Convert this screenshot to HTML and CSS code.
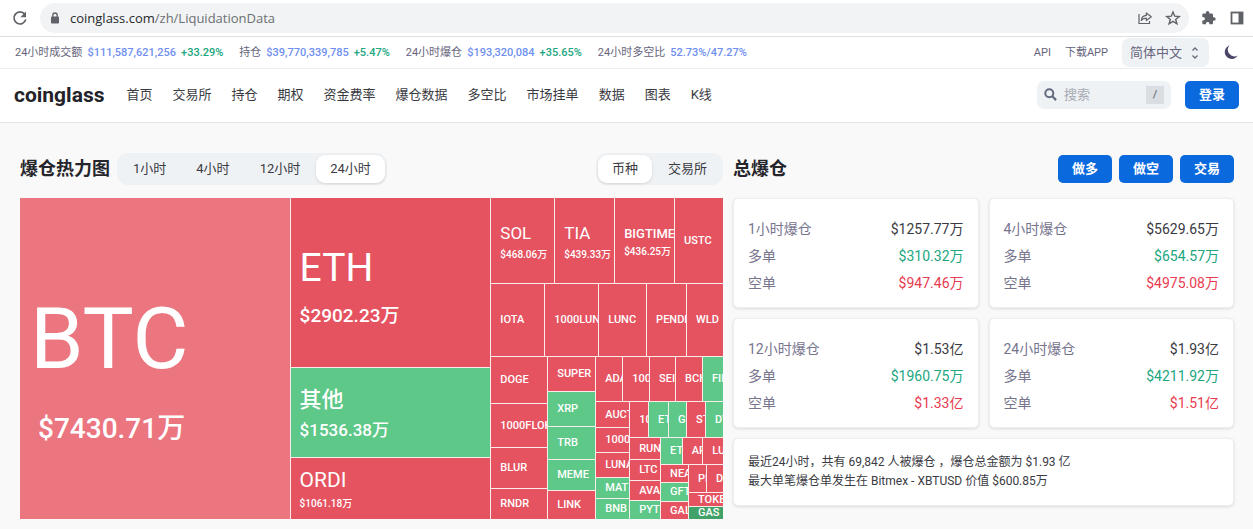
FILE: index.html
```html
<!DOCTYPE html>
<html lang="zh-CN">
<head>
<meta charset="utf-8">
<meta name="viewport" content="width=device-width, initial-scale=1">
<title>coinglass</title>
<link rel="stylesheet" href="styles.css">
</head>
<body>
<div class="browser">
  <button class="icon-btn" aria-label="Reload"><svg width="16" height="16" viewBox="0 0 16 16"><path d="M12.7 4.2A6 6 0 1 0 13.8 9.6" fill="none" stroke="#5f6368" stroke-width="1.7"/><path d="M14 1.6v5.6H8.4z" fill="#5f6368"/></svg></button>
  <div class="omnibox">
    <svg width="10" height="12" viewBox="0 0 10 12"><rect x="1" y="4.5" width="8" height="7" rx="1" fill="#5f6368"/><path d="M2.8 5V3.2a2.2 2.2 0 0 1 4.4 0V5" fill="none" stroke="#5f6368" stroke-width="1.3"/></svg>
    <span class="url"><b>coinglass.com</b>/zh/LiquidationData</span>
    <button class="icon-btn" aria-label="Share"><svg width="16" height="16" viewBox="0 0 16 16" fill="none" stroke="#5f6368" stroke-width="1.2"><path d="M2 4v9.5h10.5V11"/><path d="M9.3 3v2.4C6 5.600 4.600 7.600 4.300 10.500c1.300-1.700 2.700-2.300 5-2.300v2.400L14.300 6.800z" stroke-linejoin="round"/></svg></button>
    <button class="icon-btn" aria-label="Bookmark"><svg width="16" height="16" viewBox="0 0 16 16"><path d="M8 2l1.700 4.200 4.500.3-3.500 2.900 1.200 4.400L8 11.400l-3.900 2.400 1.200-4.400L1.800 6.500l4.500-.3z" fill="none" stroke="#5f6368" stroke-width="1.400"/></svg></button>
  </div>
  <button class="icon-btn" aria-label="Extensions"><svg width="16" height="16" viewBox="0 0 16 16"><path d="M13 7.300h-1V4.700c0-.7-.6-1.300-1.300-1.300H8.300V2.600a1.700 1.700 0 0 0-3.400 0v.8H2.500c-.7 0-1.200.6-1.200 1.300V7h.8a1.800 1.800 0 0 1 0 3.600h-.8V13c0 .7.500 1.300 1.200 1.300h2.400v-.8a1.800 1.800 0 0 1 3.500 0v.8h2.300c.7 0 1.300-.6 1.300-1.300v-2.300h1a1.700 1.700 0 0 0 0-3.400z" fill="#5f6368"/></svg></button>
  <button class="icon-btn" aria-label="Side panel"><svg width="14" height="14" viewBox="0 0 14 14"><rect x="1.500" y="1.500" width="11" height="11" fill="none" stroke="#5f6368" stroke-width="1.800"/><rect x="8.500" y="1.500" width="4" height="11" fill="#5f6368"/></svg></button>
</div>

<div class="ticker">
  <div class="stats">
    <span class="stat">24小时成交额 <b class="blue">$111,587,621,256</b> <b class="up">+33.29%</b></span>
    <span class="stat">持仓 <b class="blue">$39,770,339,785</b> <b class="up">+5.47%</b></span>
    <span class="stat">24小时爆仓 <b class="blue">$193,320,084</b> <b class="up">+35.65%</b></span>
    <span class="stat">24小时多空比 <b class="blue">52.73%/47.27%</b></span>
  </div>
  <div class="tools">
    <a href="#">API</a>
    <a href="#">下载APP</a>
    <div class="language">
      <select aria-label="语言"><option>简体中文</option></select>
      <svg width="8" height="14" viewBox="0 0 8 14" fill="none" stroke="#666b7a" stroke-width="1.300"><path d="M1.500 4.500L4 2l2.500 2.500M1.500 9.500L4 12l2.500-2.500"/></svg>
    </div>
    <button class="icon-btn" aria-label="深色模式"><svg width="16" height="16" viewBox="0 0 16 16"><path d="M6.500 0.500A6.900 6.900 0 1 0 14.600 10.600 6.600 6.600 0 0 1 6.500 0.500z" fill="#4a4668"/></svg></button>
  </div>
</div>

<header class="header">
  <a class="logo" href="#">coinglass</a>
  <nav class="nav">
    <a href="#">首页</a><a href="#">交易所</a><a href="#">持仓</a><a href="#">期权</a><a href="#">资金费率</a><a href="#">爆仓数据</a><a href="#">多空比</a><a href="#">市场挂单</a><a href="#">数据</a><a href="#">图表</a><a href="#">K线</a>
  </nav>
  <label class="search">
    <svg width="13" height="13" viewBox="0 0 13 13" fill="none" stroke="#646b80"><circle cx="5.300" cy="5.300" r="4" stroke-width="2"/><path d="M8.300 8.300l3.800 3.800" stroke-width="2.200"/></svg>
    <input type="text" placeholder="搜索" aria-label="搜索">
    <kbd>/</kbd>
  </label>
  <button class="primary">登录</button>
</header>

<main class="main">
  <section class="panel">
    <div class="panel-head">
      <h1>爆仓热力图</h1>
      <div class="tabs">
        <button>1小时</button><button>4小时</button><button>12小时</button><button class="active">24小时</button>
      </div>
      <div class="tabs tabs-end">
        <button class="active">币种</button><button>交易所</button>
      </div>
    </div>
    <div class="treemap">
      <div class="tile soft btc" style="--w:270"><span>BTC</span><em>$7430.71万</em></div>
      <div class="col" style="--w:200">
        <div class="tile eth" style="--w:169"><span>ETH</span><em>$2902.23万</em></div>
        <div class="tile green other" style="--w:89"><span>其他</span><em>$1536.38万</em></div>
        <div class="tile ordi" style="--w:61"><span>ORDI</span><em>$1061.18万</em></div>
      </div>
      <div class="col" style="--w:232">
        <div class="row" style="--w:85">
          <div class="tile mid" style="--w:63"><span>SOL</span><em>$468.06万</em></div>
          <div class="tile mid" style="--w:59"><span>TIA</span><em>$439.33万</em></div>
          <div class="tile big" style="--w:59"><span>BIGTIME</span><em>$436.25万</em></div>
          <div class="tile" style="--w:48"><span>USTC</span></div>
        </div>
        <div class="row" style="--w:72">
          <div class="tile" style="--w:53"><span>IOTA</span></div>
          <div class="tile" style="--w:53"><span>1000LUNC</span></div>
          <div class="tile" style="--w:47"><span>LUNC</span></div>
          <div class="tile" style="--w:39"><span>PENDLE</span></div>
          <div class="tile" style="--w:36"><span>WLD</span></div>
        </div>
        <div class="row" style="--w:162">
          <div class="col" style="--w:56">
            <div class="tile" style="--w:46"><span>DOGE</span></div>
            <div class="tile" style="--w:43"><span>1000FLOKI</span></div>
            <div class="tile" style="--w:40"><span>BLUR</span></div>
            <div class="tile" style="--w:30"><span>RNDR</span></div>
          </div>
          <div class="col" style="--w:47">
            <div class="tile" style="--w:34"><span>SUPER</span></div>
            <div class="tile green" style="--w:34"><span>XRP</span></div>
            <div class="tile green" style="--w:32"><span>TRB</span></div>
            <div class="tile green" style="--w:30"><span>MEME</span></div>
            <div class="tile" style="--w:28"><span>LINK</span></div>
          </div>
          <div class="col" style="--w:127">
            <div class="row" style="--w:44">
              <div class="tile" style="--w:26"><span>ADA</span></div>
              <div class="tile" style="--w:26"><span>1000</span></div>
              <div class="tile" style="--w:25"><span>SEI</span></div>
              <div class="tile" style="--w:26"><span>BCH</span></div>
              <div class="tile green" style="--w:20"><span>FIL</span></div>
            </div>
            <div class="row" style="--w:117">
              <div class="col" style="--w:33">
                <div class="tile" style="--w:25"><span>AUCTION</span></div>
                <div class="tile" style="--w:24"><span>1000</span></div>
                <div class="tile" style="--w:24"><span>LUNA</span></div>
                <div class="tile green" style="--w:20"><span>MATIC</span></div>
                <div class="tile green" style="--w:20"><span>BNB</span></div>
              </div>
              <div class="col" style="--w:93">
                <div class="row" style="--w:35">
                  <div class="tile" style="--w:18"><span>10</span></div>
                  <div class="tile green" style="--w:19"><span>ET</span></div>
                  <div class="tile green" style="--w:17"><span>GL</span></div>
                  <div class="tile" style="--w:18"><span>ST</span></div>
                  <div class="tile green" style="--w:17"><span>DY</span></div>
                </div>
                <div class="row" style="--w:81">
                  <div class="col" style="--w:30">
                    <div class="tile" style="--w:21"><span>RUNE</span></div>
                    <div class="tile" style="--w:20"><span>LTC</span></div>
                    <div class="tile" style="--w:19"><span>AVAX</span></div>
                    <div class="tile green" style="--w:18"><span>PYTH</span></div>
                  </div>
                  <div class="col" style="--w:62">
                    <div class="row" style="--w:26">
                      <div class="tile green" style="--w:21"><span>ET</span></div>
                      <div class="tile" style="--w:20"><span>AR</span></div>
                      <div class="tile" style="--w:20"><span>LU</span></div>
                    </div>
                    <div class="row" style="--w:54">
                      <div class="col" style="--w:27">
                        <div class="tile" style="--w:17"><span>NEAR</span></div>
                        <div class="tile green" style="--w:18"><span>GFT</span></div>
                        <div class="tile" style="--w:17"><span>GALA</span></div>
                      </div>
                      <div class="col" style="--w:34">
                        <div class="row" style="--w:27">
                          <div class="tile" style="--w:17"><span>PE</span></div>
                          <div class="tile" style="--w:16"><span>DO</span></div>
                        </div>
                        <div class="tile" style="--w:13"><span>TOKEN</span></div>
                        <div class="tile deep" style="--w:12"><span>GAS</span></div>
                      </div>
                    </div>
                  </div>
                </div>
              </div>
            </div>
          </div>
        </div>
      </div>
    </div>
  </section>

  <section class="panel">
    <div class="panel-head">
      <h2>总爆仓</h2>
      <div class="actions">
        <button class="primary">做多</button><button class="primary">做空</button><button class="primary">交易</button>
      </div>
    </div>
    <div class="cards">
      <dl class="card">
        <div><dt>1小时爆仓</dt><dd>$1257.77万</dd></div>
        <div><dt>多单</dt><dd class="up">$310.32万</dd></div>
        <div><dt>空单</dt><dd class="down">$947.46万</dd></div>
      </dl>
      <dl class="card">
        <div><dt>4小时爆仓</dt><dd>$5629.65万</dd></div>
        <div><dt>多单</dt><dd class="up">$654.57万</dd></div>
        <div><dt>空单</dt><dd class="down">$4975.08万</dd></div>
      </dl>
      <dl class="card">
        <div><dt>12小时爆仓</dt><dd>$1.53亿</dd></div>
        <div><dt>多单</dt><dd class="up">$1960.75万</dd></div>
        <div><dt>空单</dt><dd class="down">$1.33亿</dd></div>
      </dl>
      <dl class="card">
        <div><dt>24小时爆仓</dt><dd>$1.93亿</dd></div>
        <div><dt>多单</dt><dd class="up">$4211.92万</dd></div>
        <div><dt>空单</dt><dd class="down">$1.51亿</dd></div>
      </dl>
      <div class="card summary">
        <p>最近24小时，共有 69,842 人被爆仓 ，爆仓总金额为 $1.93 亿</p>
        <p>最大单笔爆仓单发生在 Bitmex - XBTUSD 价值 $600.85万</p>
      </div>
    </div>
  </section>
</main>
</body>
</html>
```
FILE: styles.css
```css
* { box-sizing: border-box; }

body {
  margin: 0;
  background: #f9f9f9;
  color: #3a3a42;
  font: 13px/20px Roboto, "Noto Sans CJK SC", sans-serif;
}

a { color: inherit; text-decoration: none; }
button, input, select { font: inherit; color: inherit; border: 0; padding: 0; background: none; }
h1, h2, p, dl, dd { margin: 0; }
b { font-weight: 400; }
em { font-style: normal; }
svg { display: block; flex: none; }

.blue { color: #6f8fef; }
.up { color: #22a67f; }
.down { color: #e93b50; }
.icon-btn { display: flex; align-items: center; justify-content: center; width: 16px; height: 16px; }

/* Browser bar */
.browser {
  display: flex;
  align-items: center;
  gap: 12px;
  height: 37px;
  padding: 0 8px 1px 12px;
  background: #fff;
  border-bottom: 1px solid #dedfe1;
}
.omnibox {
  display: flex;
  flex: 1;
  align-items: center;
  gap: 12px;
  height: 30px;
  padding: 0 8px 0 10px;
  border-radius: 15px;
  background: #f1f3f4;
}
.url { flex: 1; margin-left: -2px; color: #6b6f73; font-family: "Open Sans", sans-serif; font-size: 13px; }
.url b { color: #27292c; }

/* Market ticker */
.ticker {
  display: flex;
  align-items: center;
  justify-content: space-between;
  height: 32px;
  padding: 0 14px 0 15px;
  background: #fff;
  border-bottom: 1px solid #ededef;
  color: #66647c;
  font-size: 11px;
}
.stats { display: flex; gap: 16px; }
.stat { display: flex; gap: 5px; white-space: nowrap; }
.stat b { font-weight: 500; }
.tools { display: flex; align-items: center; gap: 14px; }
.language { position: relative; display: flex; align-items: center; }
.language select {
  width: 87px;
  height: 29px;
  padding: 0 24px 0 8px;
  border-radius: 7px;
  background: #eff2f5;
  font-size: 13px;
  appearance: none;
}
.language svg { position: absolute; right: 10px; pointer-events: none; }

/* Site header */
.header {
  display: flex;
  align-items: center;
  gap: 14px;
  height: 54px;
  padding: 0 14px 2px;
  background: #fff;
  border-bottom: 1px solid #e4e4e6;
}
.logo { color: #222228; font-size: 21px; font-weight: 700; }
.nav { display: flex; flex: 1; gap: 20px; padding-left: 8px; white-space: nowrap; }
.search {
  display: flex;
  align-items: center;
  gap: 7px;
  width: 134px;
  height: 28px;
  padding: 0 7px;
  border-radius: 7px;
  background: #eff2f5;
}
.search input { flex: 1; min-width: 0; outline: 0; }
.search input::placeholder { color: #a6abb3; opacity: 1; }
.search kbd {
  width: 18px;
  height: 18px;
  background: #dadde1;
  color: #55585e;
  font: 11px/18px Roboto, sans-serif;
  text-align: center;
}
.primary {
  width: 54px;
  height: 28px;
  border-radius: 5px;
  background: #0b69de;
  color: #fff;
  font-weight: 700;
}

/* Main area */
.main {
  display: grid;
  grid-template-columns: 703fr 501fr;
  gap: 10px;
  align-items: start;
  padding: 30px 19px 10px 20px;
}
.panel { min-width: 0; }
.panel-head { display: flex; align-items: center; gap: 7px; margin-bottom: 13px; height: 32px; }
h1, h2 { color: #25252b; font-size: 18px; line-height: 32px; font-weight: 700; white-space: nowrap; }
.tabs { display: flex; gap: 2px; padding: 2px; border-radius: 11px; background: #eff2f5; }
.tabs button { height: 28px; padding: 0 14px; border-radius: 9px; }
.tabs .active { background: #fff; box-shadow: 0 1px 3px #0000001f; }
.tabs-end, .actions { margin-left: auto; }
.actions { display: flex; gap: 7px; }

/* Liquidation treemap */
.treemap {
  display: flex;
  gap: 1px;
  aspect-ratio: 703 / 321;
  overflow: hidden;
  background: #fbecec;
  color: #fff;
}
.col, .row, .tile { display: flex; flex: var(--w) 1 0px; min-width: 0; min-height: 0; gap: 1px; }
.col, .tile { flex-direction: column; }
.tile {
  gap: 0;
  justify-content: center;
  overflow: hidden;
  background: #e55361;
  font-size: 11px;
  font-weight: 500;
  line-height: 12px;
  white-space: nowrap;
}
.tile span, .tile em { padding-left: 9px; }
.soft { background: #eb7680; }
.green { background: #5dc887; }
.deep { background: #40a268; }
.btc span { padding-left: 10px; font-size: 86px; line-height: 139px; font-weight: 400; }
.btc em { padding-left: 18px; font-size: 28px; line-height: 41px; }
.eth span { font-size: 39px; line-height: 65px; font-weight: 400; }
.eth em { font-size: 19px; line-height: 29px; }
.other span { font-size: 22px; line-height: 35px; }
.other em { font-size: 17px; line-height: 27px; }
.ordi span { font-size: 21px; line-height: 30px; font-weight: 400; }
.ordi em { font-size: 10px; line-height: 18px; }
.mid span { font-size: 17px; line-height: 27px; font-weight: 400; }
.big span { font-size: 13px; line-height: 21px; }
.mid em, .big em { font-size: 10px; line-height: 15px; }

/* Totals */
.cards { display: grid; grid-template-columns: 1fr 1fr; gap: 10px; }
.card {
  padding: 17px 14px 10px;
  border: 1px solid #eeeeef;
  border-radius: 5px;
  background: #fff;
  box-shadow: 0 1px 3px #0000001f;
  font-size: 14px;
  line-height: 27px;
}
.card div { display: flex; justify-content: space-between; }
.card dt { color: #77758e; }
.summary { grid-column: 1 / -1; padding: 14px; font-size: 12px; line-height: 19px; }
```
